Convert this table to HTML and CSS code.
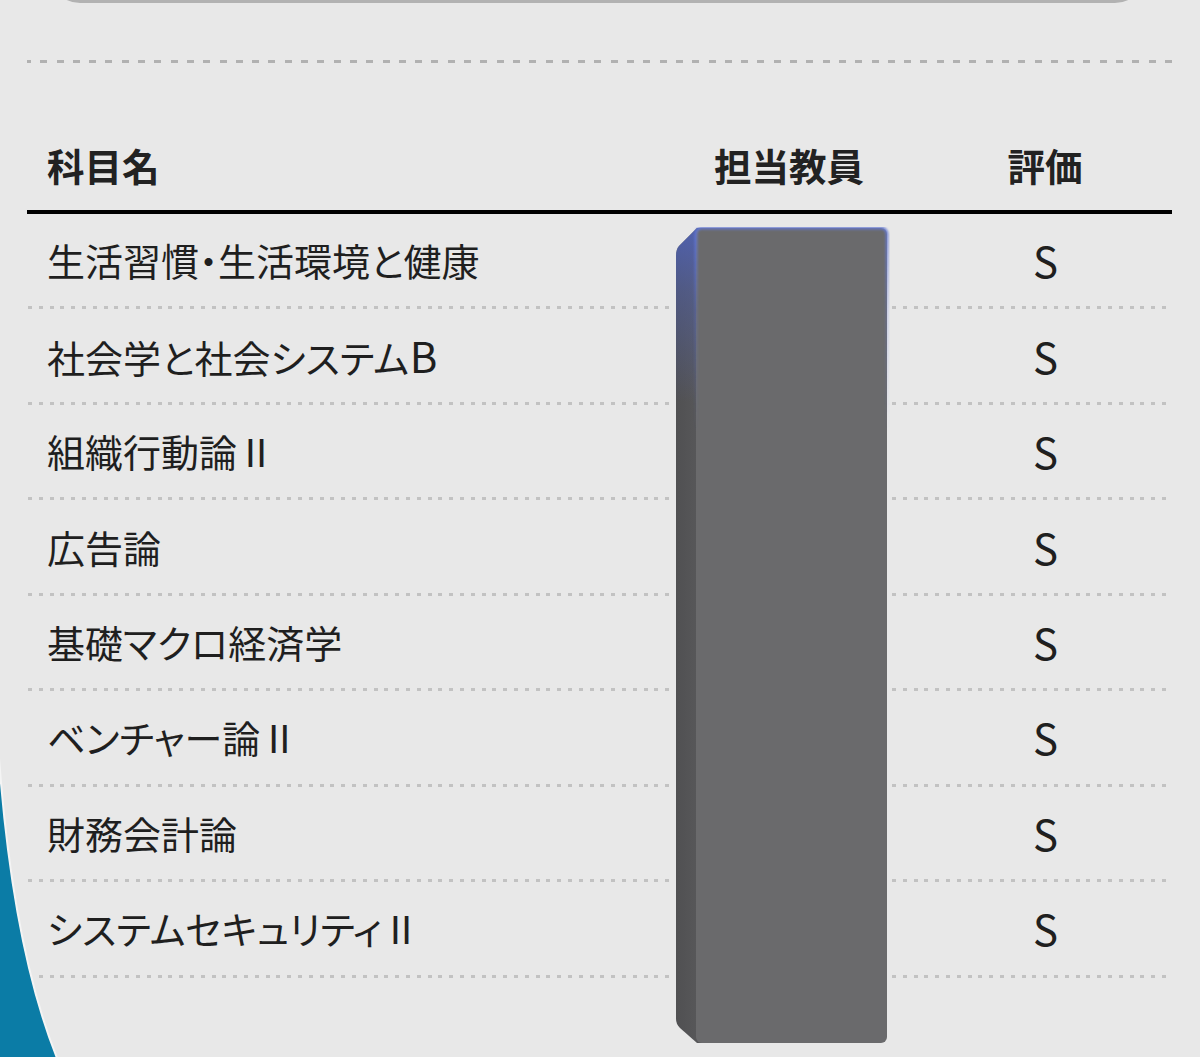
FILE: index.html
```html
<!DOCTYPE html>
<html lang="ja">
<head>
<meta charset="utf-8">
<title>成績</title>
<link rel="stylesheet" href="styles.css">
</head>
<body>
<div class="page">
  <div class="topbox"></div>
  <div class="dash-rule"></div>
  <div class="grades">
    <div class="head">
      <div class="c-subject">科目名</div>
      <div class="c-teacher">担当教員</div>
      <div class="c-grade">評価</div>
    </div>
    <div class="row"><div class="c-subject">生活習慣・生活環境と健康</div><div class="c-teacher"></div><div class="c-grade">S</div></div>
    <div class="row"><div class="c-subject">社会学と社会システム<span class="latin">B</span></div><div class="c-teacher"></div><div class="c-grade">S</div></div>
    <div class="row"><div class="c-subject">組織行動論Ⅱ</div><div class="c-teacher"></div><div class="c-grade">S</div></div>
    <div class="row"><div class="c-subject">広告論</div><div class="c-teacher"></div><div class="c-grade">S</div></div>
    <div class="row"><div class="c-subject">基礎マクロ経済学</div><div class="c-teacher"></div><div class="c-grade">S</div></div>
    <div class="row"><div class="c-subject">ベンチャー論Ⅱ</div><div class="c-teacher"></div><div class="c-grade">S</div></div>
    <div class="row"><div class="c-subject">財務会計論</div><div class="c-teacher"></div><div class="c-grade">S</div></div>
    <div class="row"><div class="c-subject">システムセキュリティⅡ</div><div class="c-teacher"></div><div class="c-grade">S</div></div>
  </div>

  <svg class="curve" width="80" height="320" viewBox="0 0 80 320">
    <path d="M0,20 C8,130 24,235 58,320 L0,320 Z" fill="#0b7ca6" stroke="#f4f4f4" stroke-width="2"/>
  </svg>

  <svg class="redact" width="215" height="818" viewBox="0 0 215 818">
    <defs>
      <linearGradient id="side" x1="0" y1="0" x2="1" y2="0">
        <stop offset="0" stop-color="#505052"/>
        <stop offset="1" stop-color="#5d5d5f"/>
      </linearGradient>
      <linearGradient id="sideglow" x1="0" y1="0" x2="0" y2="1">
        <stop offset="0" stop-color="#4f63bd" stop-opacity="0.85"/>
        <stop offset="0.08" stop-color="#4f63bd" stop-opacity="0.45"/>
        <stop offset="0.22" stop-color="#4f63bd" stop-opacity="0"/>
      </linearGradient>
      <linearGradient id="glow" x1="0" y1="0" x2="0" y2="1">
        <stop offset="0" stop-color="#6478d0" stop-opacity="0.9"/>
        <stop offset="0.1" stop-color="#6478d0" stop-opacity="0.3"/>
        <stop offset="0.25" stop-color="#6478d0" stop-opacity="0"/>
      </linearGradient>
      <filter id="blur" x="-10%" y="-10%" width="120%" height="120%">
        <feGaussianBlur stdDeviation="1.2"/>
      </filter>
    </defs>
    <path d="M22,1 L4,19 Q1,22 1,30 L1,792 Q1,797 5,801 L22,816 L40,816 L40,1 Z" fill="url(#side)"/>
    <path d="M22,1 L4,19 Q1,22 1,30 L1,792 L40,792 L40,1 Z" fill="url(#sideglow)"/>
    <rect x="21" y="1" width="191" height="815" rx="6" fill="#6a6a6c"/>
    <rect x="21" y="1" width="191" height="815" rx="6" fill="none" stroke="url(#glow)" stroke-width="3" filter="url(#blur)"/>
  </svg>
</div>
</body>
</html>
```

FILE: styles.css
```css
* { box-sizing: border-box; }

html, body {
  margin: 0;
  padding: 0;
  background: #e8e8e8;
}

body {
  font-family: "Noto Sans CJK JP", "Noto Sans", sans-serif;
  color: #1f1f1f;
}

.page {
  position: relative;
  width: 1200px;
  height: 1057px;
  overflow: hidden;
  background: #e8e8e8;
}

.topbox {
  margin: -57px 55px 0 50px;
  height: 60px;
  border: 3px solid #b2b2b2;
  border-radius: 30px;
}

.dash-rule {
  margin: 57px 28px 0 27px;
  height: 3px;
  background-image: repeating-linear-gradient(to right, #b1b1b1 0 7px, transparent 7px 16.3px);
  background-position: -3px 0;
}

.grades {
  margin: 0 28px 0 27px;
}

.head,
.row {
  display: grid;
  grid-template-columns: 633px 258px 1fr;
  align-items: center;
}

.head {
  margin-top: 77px;
  padding-bottom: 20px;
  border-bottom: 4px solid #000;
  font-size: 37.5px;
  font-weight: 700;
  line-height: 50px;
  color: #222;
}

.row {
  height: 95.45px;
  padding-bottom: 3px;
  font-size: 38px;
  line-height: 50px;
  font-feature-settings: "palt";
  background-image: repeating-linear-gradient(to right, #c2c2c2 0 4px, transparent 4px 10.8px);
  background-size: 100% 3px;
  background-position: 1px bottom;
  background-repeat: no-repeat;
}

.latin {
  font-size: 42px;
  margin-left: 1px;
}

.c-subject {
  padding-left: 20px;
  white-space: nowrap;
}

.c-teacher,
.c-grade {
  text-align: center;
}

.row .c-grade {
  font-size: 42px;
  padding-left: 1px;
}

.curve {
  position: absolute;
  left: -1px;
  top: 738px;
}

.redact {
  position: absolute;
  left: 675px;
  top: 227px;
}
```
